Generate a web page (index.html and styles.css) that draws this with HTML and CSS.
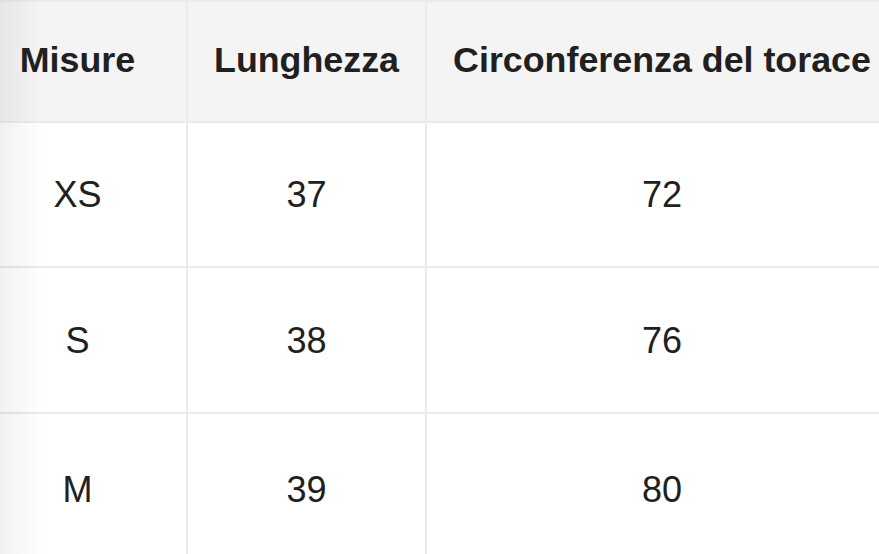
FILE: index.html
```html
<!DOCTYPE html>
<html lang="it">
<head>
<meta charset="utf-8">
<title>Tabella misure</title>
<link rel="stylesheet" href="styles.css">
</head>
<body>
<div class="viewport">
  <div class="size-table">
    <div class="cell head">Misure</div>
    <div class="cell head">Lunghezza</div>
    <div class="cell head">Circonferenza del torace</div>
    <div class="cell">XS</div>
    <div class="cell">37</div>
    <div class="cell">72</div>
    <div class="cell">S</div>
    <div class="cell">38</div>
    <div class="cell">76</div>
    <div class="cell">M</div>
    <div class="cell">39</div>
    <div class="cell">80</div>
  </div>
</div>
</body>
</html>
```

FILE: styles.css
```css
html, body {
  margin: 0;
  padding: 0;
  background: #ffffff;
}

.viewport {
  position: relative;
  width: 879px;
  height: 554px;
  overflow: hidden;
}

.viewport::before {
  content: "";
  position: absolute;
  left: 0;
  top: 0;
  bottom: 0;
  width: 44px;
  background: linear-gradient(to right, rgba(0, 0, 0, 0.055), rgba(0, 0, 0, 0));
  pointer-events: none;
  z-index: 2;
}

.size-table {
  margin-left: -31px;
  width: 928px;
  display: grid;
  grid-template-columns: 217px 237px 470px;
  grid-template-rows: 119px 143px 144px 150px;
  gap: 2px;
  padding-top: 2px;
  background: #ebebeb;
  font-family: "Liberation Sans", Arial, Helvetica, sans-serif;
  color: #202020;
}

.cell {
  background: #ffffff;
  display: flex;
  align-items: center;
  justify-content: center;
  font-size: 36px;
  line-height: 1;
  padding-top: 1px;
}

.cell.head {
  background: #f4f4f4;
  font-weight: bold;
  font-size: 35.8px;
  padding-top: 0;
  padding-bottom: 1px;
}
```
